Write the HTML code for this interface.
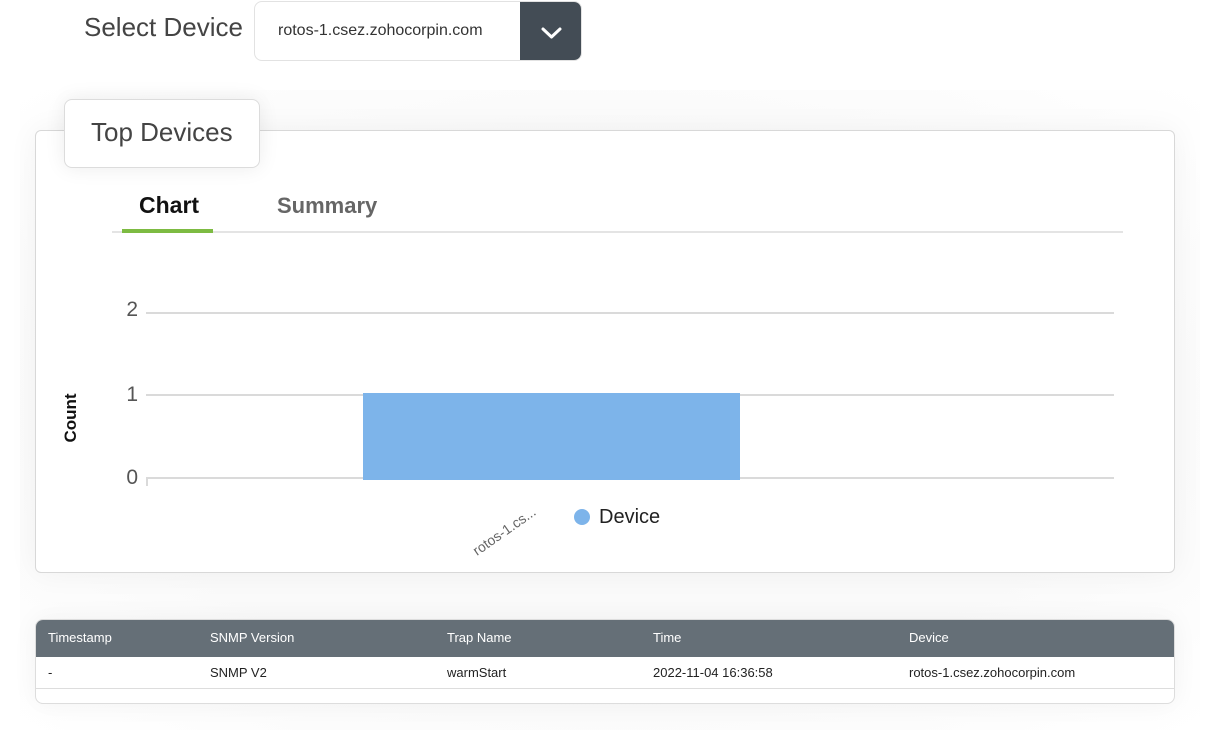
<!DOCTYPE html>
<html><head><meta charset="utf-8"><style>
*{margin:0;padding:0;box-sizing:border-box}
body{width:1210px;height:736px;background:#fff;font-family:"Liberation Sans",sans-serif;position:relative;overflow:hidden;color:#333}
.abs{position:absolute}
</style></head><body>
<div class="abs" style="left:20px;top:90px;width:1180px;height:640px;background:radial-gradient(ellipse at center,#fafafa 60%,#fff 100%)"></div>
<div class="abs" style="left:84px;top:12px;font-size:26px;color:#444">Select Device</div>
<div class="abs" style="left:254px;top:1px;width:328px;height:60px;border:1px solid #e2e2e2;border-radius:8px;overflow:hidden;background:#fff">
  <div class="abs" style="left:23px;top:20px;font-size:16px;color:#333">rotos-1.csez.zohocorpin.com</div>
  <div class="abs" style="left:265px;top:0;width:63px;height:60px;background:#434c55">
    <svg width="63" height="60"><path d="M23 27 L31.5 35 L40 27" stroke="#fff" stroke-width="3" fill="none" stroke-linecap="round" stroke-linejoin="round"/></svg>
  </div>
</div>
<div class="abs" style="left:35px;top:130px;width:1140px;height:443px;border:1px solid #d8d8d8;border-radius:6px;background:#fff;box-shadow:0 0 30px rgba(0,0,0,0.05)"></div>
<div class="abs" style="left:64px;top:99px;width:196px;height:69px;border:1px solid #dcdcdc;border-radius:8px;background:#fff;box-shadow:0 0 20px rgba(0,0,0,0.08);font-size:26px;color:#444;padding:17px 0 0 26px">Top Devices</div>
<div class="abs" style="left:139px;top:192px;font-size:23px;font-weight:bold;color:#111">Chart</div>
<div class="abs" style="left:277px;top:193px;font-size:22px;font-weight:bold;color:#666">Summary</div>
<div class="abs" style="left:112px;top:231px;width:1011px;height:2px;background:#e4e4e4"></div>
<div class="abs" style="left:122px;top:229px;width:91px;height:4px;background:#7dbb42"></div>
<svg class="abs" style="left:0;top:0" width="1210" height="736">
  <g stroke="#dadada" stroke-width="2">
    <line x1="146" y1="313" x2="1114" y2="313"/>
    <line x1="146" y1="395" x2="1114" y2="395"/>
    <line x1="146" y1="478" x2="1114" y2="478"/>
    <line x1="147" y1="478" x2="147" y2="486"/>
  </g>
  <g font-family="Liberation Sans" font-size="21" fill="#555" text-anchor="end">
    <text x="138" y="316">2</text><text x="138" y="401">1</text><text x="138" y="484">0</text>
  </g>
  <rect x="363" y="393" width="377" height="87" fill="#7db4ea"/>
  <text x="76" y="418" transform="rotate(-90 76 418)" font-family="Liberation Sans" font-size="17" font-weight="bold" fill="#111" text-anchor="middle">Count</text>
  <text x="477" y="556" transform="rotate(-35 477 556)" font-family="Liberation Sans" font-size="14" fill="#666">rotos-1.cs...</text>
  <circle cx="582" cy="517" r="8" fill="#7db4ea"/>
  <text x="599" y="523" font-family="Liberation Sans" font-size="20" fill="#222">Device</text>
</svg>
<div class="abs" style="left:35px;top:619px;width:1140px;height:85px;border:1px solid #ddd;border-radius:8px;overflow:hidden;background:#fff;box-shadow:0 0 25px rgba(0,0,0,0.05);font-size:13px">
  <div class="abs" style="left:0;top:0;width:1140px;height:37px;background:#656f77;color:#fff"></div>
  <div class="abs" style="left:0;top:68px;width:1140px;height:1px;background:#ddd"></div>
  <div class="abs" style="left:12px;top:10px;color:#fff">Timestamp</div>
  <div class="abs" style="left:174px;top:10px;color:#fff">SNMP Version</div>
  <div class="abs" style="left:411px;top:10px;color:#fff">Trap Name</div>
  <div class="abs" style="left:617px;top:10px;color:#fff">Time</div>
  <div class="abs" style="left:873px;top:10px;color:#fff">Device</div>
  <div class="abs" style="left:12px;top:45px;color:#222">-</div>
  <div class="abs" style="left:174px;top:45px;color:#222">SNMP V2</div>
  <div class="abs" style="left:411px;top:45px;color:#222">warmStart</div>
  <div class="abs" style="left:617px;top:45px;color:#222">2022-11-04 16:36:58</div>
  <div class="abs" style="left:873px;top:45px;color:#222">rotos-1.csez.zohocorpin.com</div>
</div>
</body></html>
